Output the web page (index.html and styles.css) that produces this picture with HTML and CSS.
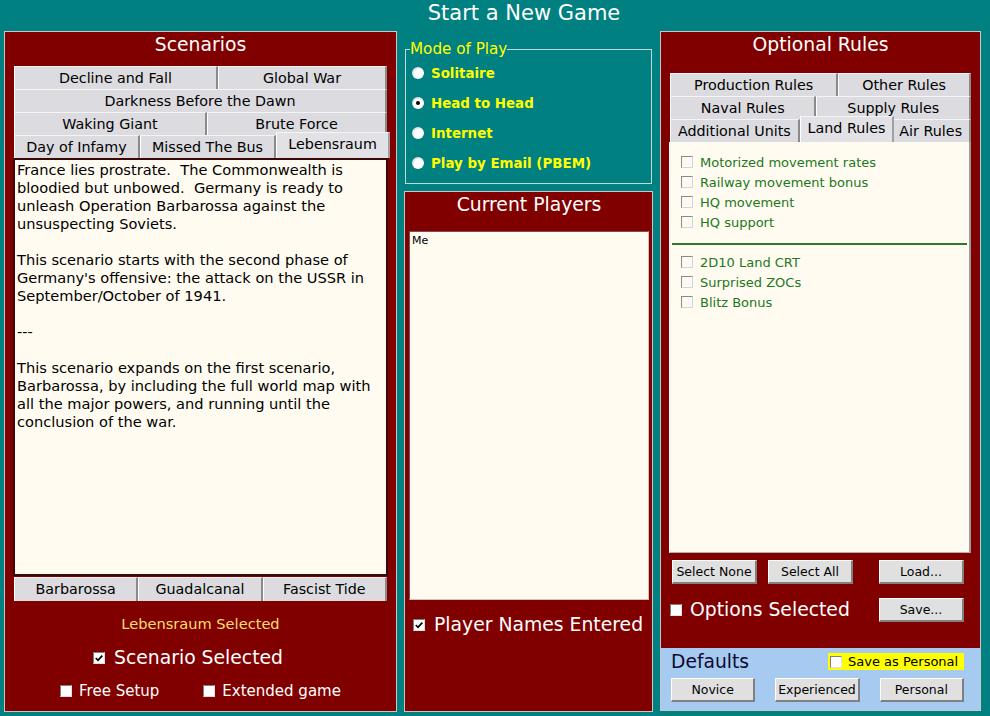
FILE: index.html
```html
<!DOCTYPE html>
<html lang="en">

<head>
    <meta charset="UTF-8">
    <title>Start a New Game</title>
    <link rel="stylesheet" href="styles.css">
</head>

<body>
    <header class="page-title">Start a New Game</header>

    <main class="layout">
        <!-- left: scenarios -->
        <section class="panel scenarios">
            <h2 class="panel-title">Scenarios</h2>
            <div class="tabs">
                <div class="tab-row">
                    <span class="tab">Decline and Fall</span>
                    <span class="tab">Global War</span>
                </div>
                <div class="tab-row">
                    <span class="tab">Darkness Before the Dawn</span>
                </div>
                <div class="tab-row">
                    <span class="tab">Waking Giant</span>
                    <span class="tab">Brute Force</span>
                </div>
                <div class="tab-row">
                    <span class="tab">Day of Infamy</span>
                    <span class="tab">Missed The Bus</span>
                    <span class="tab active">Lebensraum</span>
                </div>
            </div>
            <div class="desc">France lies prostrate.  The Commonwealth is
bloodied but unbowed.  Germany is ready to
unleash Operation Barbarossa against the
unsuspecting Soviets.

This scenario starts with the second phase of
Germany's offensive: the attack on the USSR in
September/October of 1941.

---

This scenario expands on the first scenario,
Barbarossa, by including the full world map with
all the major powers, and running until the
conclusion of the war.</div>
            <div class="tab-row bottom-tabs">
                <span class="tab">Barbarossa</span>
                <span class="tab">Guadalcanal</span>
                <span class="tab">Fascist Tide</span>
            </div>
            <p class="selected-note">Lebensraum Selected</p>
            <div class="big-check scenario-ok">
                <span class="cb checked"><svg viewBox="0 0 10 10"><path d="M1.8 5 L4 7.3 L8.3 2.6" /></svg></span>
                Scenario Selected
            </div>
            <div class="small-checks">
                <span class="check-item"><span class="cb"></span>Free Setup</span>
                <span class="check-item"><span class="cb"></span>Extended game</span>
            </div>
        </section>

        <!-- middle: mode + players -->
        <div class="middle">
            <fieldset class="mode">
                <legend>Mode of Play</legend>
                <div class="radio-row"><span class="radio"></span>Solitaire</div>
                <div class="radio-row"><span class="radio on"></span>Head to Head</div>
                <div class="radio-row"><span class="radio"></span>Internet</div>
                <div class="radio-row"><span class="radio"></span>Play by Email (PBEM)</div>
            </fieldset>

            <section class="panel players">
                <h2 class="panel-title">Current Players</h2>
                <div class="player-list">Me</div>
                <div class="big-check names">
                    <span class="cb checked"><svg viewBox="0 0 10 10"><path d="M1.8 5 L4 7.3 L8.3 2.6" /></svg></span>
                    Player Names Entered
                </div>
            </section>
        </div>

        <!-- right: optional rules -->
        <section class="rules">
            <div class="rules-main">
                <h2 class="panel-title">Optional Rules</h2>
                <div class="tabs">
                    <div class="tab-row">
                        <span class="tab">Production Rules</span>
                        <span class="tab">Other Rules</span>
                    </div>
                    <div class="tab-row">
                        <span class="tab">Naval Rules</span>
                        <span class="tab">Supply Rules</span>
                    </div>
                    <div class="tab-row">
                        <span class="tab">Additional Units</span>
                        <span class="tab active">Land Rules</span>
                        <span class="tab">Air Rules</span>
                    </div>
                </div>
                <div class="rule-list">
                    <div class="rule"><span class="cb light"></span>Motorized movement rates</div>
                    <div class="rule"><span class="cb light"></span>Railway movement bonus</div>
                    <div class="rule"><span class="cb light"></span>HQ movement</div>
                    <div class="rule"><span class="cb light"></span>HQ support</div>
                    <hr class="rule-sep">
                    <div class="rule"><span class="cb light"></span>2D10 Land CRT</div>
                    <div class="rule"><span class="cb light"></span>Surprised ZOCs</div>
                    <div class="rule"><span class="cb light"></span>Blitz Bonus</div>
                </div>
                <div class="btn-row">
                    <button class="btn">Select None</button>
                    <button class="btn">Select All</button>
                    <button class="btn push">Load...</button>
                </div>
                <div class="btn-row second">
                    <div class="big-check options"><span class="cb"></span>Options Selected</div>
                    <button class="btn push">Save...</button>
                </div>
            </div>
            <div class="defaults">
                <div class="defaults-top">
                    <span class="defaults-title">Defaults</span>
                    <span class="save-personal"><span class="cb"></span>Save as Personal</span>
                </div>
                <div class="defaults-btns">
                    <button class="btn">Novice</button>
                    <button class="btn">Experienced</button>
                    <button class="btn">Personal</button>
                </div>
            </div>
        </section>
    </main>
</body>

</html>
```

FILE: styles.css
```css
* {
    box-sizing: border-box;
}

body {
    margin: 0;
    width: 990px;
    height: 716px;
    overflow: hidden;
    background: #008080;
    font-family: "DejaVu Sans", Verdana, sans-serif;
    color: #fff;
}

.page-title {
    height: 31px;
    padding-left: 58px;
    line-height: 26px;
    text-align: center;
    font-size: 21px;
}

.layout {
    display: flex;
    gap: 7px;
    padding-left: 4px;
}

.panel {
    background: #800000;
    border: 1px solid #c8c8c8;
}

.panel-title {
    margin: 0;
    height: 34px;
    padding-top: 1px;
    line-height: 24px;
    font-size: 18.8px;
    font-weight: normal;
    text-align: center;
}

/* tabs */
.tab-row {
    display: flex;
    height: 23px;
}

.tab {
    flex: 1 1 auto;
    background: #dcdce0;
    color: #000;
    font-size: 14.3px;
    line-height: 22px;
    text-align: center;
    white-space: nowrap;
    border-top: 1px solid #f4f4f4;
    border-left: 1px solid #fff;
    border-right: 2px solid #8a8a8a;
}

.tab.active {
    position: relative;
    z-index: 1;
    height: 26px;
    margin: -3px -3px 0 0;
    background: #e2e2e6;
    line-height: 23px;
    border-right-color: #a0a0a0;
}

/* scenarios */
.scenarios {
    width: 393px;
    height: 681px;
    padding: 0 9px;
    display: flex;
    flex-direction: column;
}

.desc {
    height: 418px;
    margin: 0 -1px;
    padding: 1px 2px;
    overflow: hidden;
    background: #fffbf0;
    border: 2px solid #3a0808;
    color: #000;
    font-size: 14.6px;
    line-height: 18px;
    white-space: pre;
}

.bottom-tabs {
    margin-top: 1px;
    height: 24px;
}

.bottom-tabs .tab {
    flex: 1 1 0;
}

.selected-note {
    margin: 14px 0 0;
    text-align: center;
    color: #ffdf6a;
    font-size: 14.6px;
    line-height: 18px;
}

.big-check {
    display: flex;
    align-items: center;
    justify-content: center;
    gap: 9px;
    margin-top: 12px;
    font-size: 18.8px;
    line-height: 24px;
}

.scenario-ok {
    justify-content: flex-start;
    margin: 13px 0 0 79px;
}

.small-checks {
    display: flex;
    justify-content: center;
    gap: 44px;
    margin-top: 12px;
    font-size: 15px;
    line-height: 18px;
}

.check-item {
    display: flex;
    align-items: center;
    gap: 7px;
}

/* checkbox */
.cb {
    display: inline-block;
    flex: none;
    width: 12px;
    height: 12px;
    background: #fff;
    border-top: 1px solid #808080;
    border-left: 1px solid #808080;
    border-right: 1px solid #e0e0e0;
    border-bottom: 1px solid #e0e0e0;
}

.cb svg {
    display: block;
    width: 10px;
    height: 10px;
}

.cb svg path {
    fill: none;
    stroke: #000;
    stroke-width: 1.8;
}

.cb.light {
    background: #fbf9f2;
    border-top-color: #8a8a8a;
    border-left-color: #8a8a8a;
    border-right-color: #d4d4d4;
    border-bottom-color: #d4d4d4;
}

/* middle column */
.middle {
    width: 249px;
    display: flex;
    flex-direction: column;
}

.mode {
    margin: 9px 1px 0;
    height: 144px;
    padding: 0 0 0 8px;
    border: 1px solid #c0d8d8;
}

.mode legend {
    padding: 0;
    margin-left: -4px;
    color: #ffff00;
    font-size: 15.2px;
}

.radio-row {
    display: flex;
    align-items: center;
    gap: 7px;
    height: 30px;
    color: #ffff00;
    font-size: 13.4px;
    font-weight: bold;
}

.radio {
    width: 12px;
    height: 12px;
    margin-left: -2px;
    border-radius: 50%;
    background: radial-gradient(circle at 60% 60%, #fff 45%, #cfcfcf 80%);
    display: flex;
    align-items: center;
    justify-content: center;
}

.radio.on::after {
    content: "";
    width: 4px;
    height: 4px;
    border-radius: 50%;
    background: #000;
}

.players {
    margin-top: 7px;
    height: 521px;
    padding: 0 3px 0 4px;
}

.players .panel-title {
    height: 39px;
}

.player-list {
    height: 369px;
    padding: 2px;
    background: #fffbf0;
    border-top: 1px solid #7a5050;
    border-left: 1px solid #7a5050;
    border-right: 1px solid #d0c0c0;
    border-bottom: 1px solid #d0c0c0;
    color: #000;
    font-size: 11px;
}

.names {
    justify-content: flex-start;
    margin: 13px 0 0 4px;
}

/* right column */
.rules {
    width: 321px;
    height: 680px;
    border: 1px solid #c8c8c8;
    display: flex;
    flex-direction: column;
}

.rules-main {
    flex: 1;
    background: #800000;
    padding: 0 9px;
}

.rules-main .panel-title {
    height: 41px;
}

.rule-list {
    height: 411px;
    margin-left: -1px;
    padding-top: 10px;
    background: #fffbf0;
    border-right: 2px solid #9a9a9a;
    border-left: 1px solid #fff;
    border-bottom: 1px solid #b0b0b0;
}

.rule {
    display: flex;
    align-items: center;
    gap: 7px;
    height: 20px;
    padding-left: 11px;
    color: #217821;
    font-size: 13px;
}

.rule-sep {
    margin: 11px 2px 7px;
    border: none;
    height: 2px;
    background: #2a7a2a;
}

.btn-row {
    display: flex;
    align-items: center;
    gap: 11px;
    padding: 0 7px 0 2px;
    margin-top: 7px;
}

.btn-row.second {
    margin-top: 14px;
    padding-left: 0;
}

.btn {
    width: 85px;
    height: 24px;
    padding: 0;
    background: #e0e0e0;
    color: #000;
    font-family: inherit;
    font-size: 12.5px;
    border-top: 1px solid #fff;
    border-left: 1px solid #fff;
    border-right: 2px solid #808080;
    border-bottom: 2px solid #808080;
}

.btn.push {
    margin-left: auto;
}

.options {
    margin: 0;
    gap: 8px;
    font-size: 18.8px;
}

.defaults {
    height: 62px;
    background: #a6caf0;
    padding: 1px 16px 0 10px;
}

.defaults-top {
    display: flex;
    justify-content: space-between;
    align-items: center;
    height: 25px;
}

.defaults-title {
    color: #0a0a30;
    font-size: 18.7px;
}

.save-personal {
    display: flex;
    align-items: center;
    gap: 6px;
    width: 136px;
    height: 17px;
    padding-left: 2px;
    background: #ffff00;
    color: #000;
    font-size: 13px;
}

.defaults-btns {
    display: flex;
    gap: 20px;
    margin-top: 4px;
}
```
